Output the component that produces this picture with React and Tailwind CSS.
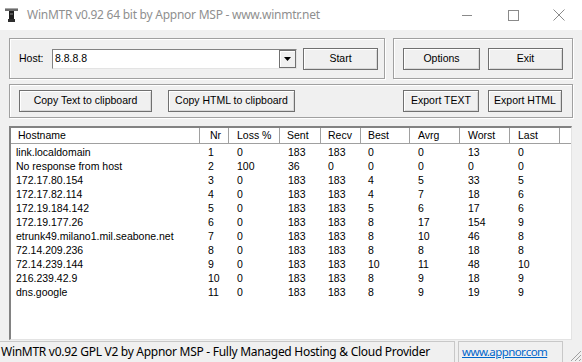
import React from "react";

const rows = [
  ["link.localdomain", 1, 0, 183, 183, 0, 0, 13, 0],
  ["No response from host", 2, 100, 36, 0, 0, 0, 0, 0],
  ["172.17.80.154", 3, 0, 183, 183, 4, 5, 33, 5],
  ["172.17.82.114", 4, 0, 183, 183, 4, 7, 18, 6],
  ["172.19.184.142", 5, 0, 183, 183, 5, 6, 17, 6],
  ["172.19.177.26", 6, 0, 183, 183, 8, 17, 154, 9],
  ["etrunk49.milano1.mil.seabone.net", 7, 0, 183, 183, 8, 10, 46, 8],
  ["72.14.209.236", 8, 0, 183, 183, 8, 8, 18, 8],
  ["72.14.239.144", 9, 0, 183, 183, 10, 11, 48, 10],
  ["216.239.42.9", 10, 0, 183, 183, 8, 9, 18, 9],
  ["dns.google", 11, 0, 183, 183, 8, 9, 19, 9],
];

const columns = [
  { label: "Hostname", cls: "w-[189px] pl-[5px]", head: "pl-[7px]" },
  { label: "Nr", cls: "w-[29px] pl-[8px]", head: "pl-[10px]" },
  { label: "Loss %", cls: "w-[51px] pl-[8px]", head: "pl-[8px]" },
  { label: "Sent", cls: "w-[41px] pl-[8px]", head: "pl-[7px]" },
  { label: "Recv", cls: "w-[40px] pl-[7px]", head: "pl-[7px]" },
  { label: "Best", cls: "w-[49px] pl-[7px]", head: "pl-[7px]" },
  { label: "Avrg", cls: "w-[50px] pl-[8px]", head: "pl-[8px]" },
  { label: "Worst", cls: "w-[50px] pl-[8px]", head: "pl-[8px]" },
  { label: "Last", cls: "w-[50px] pl-[8px]", head: "pl-[8px]" },
];

const ui = "font-['Liberation_Sans',Arial,sans-serif] text-[10.5px] text-black";

function Button({ children, className }) {
  return (
    <button
      className={`h-[22px] flex items-center justify-center bg-[#f0f0f0] border border-[#707070] shadow-[inset_1px_1px_0_#ffffff,inset_-1px_-1px_0_#d8d8d8] ${ui} ${className}`}
    >
      {children}
    </button>
  );
}

function GroupBox({ children, className }) {
  return (
    <div
      className={`flex items-center border border-[#a0a0a0] shadow-[inset_1px_1px_0_#ffffff,1px_1px_0_#ffffff] ${className}`}
    >
      {children}
    </div>
  );
}

export default function App() {
  return (
    <div className="w-[582px] h-[362px] flex flex-col bg-[#f0f0f0] overflow-hidden">
      {/* title bar */}
      <div className="h-[30px] bg-white flex items-center shrink-0">
        <svg width="14" height="16" viewBox="0 0 14 16" className="ml-[5px] mr-[8px]">
          <rect x="0" y="1" width="13" height="3" fill="#6b6b6b" />
          <rect x="0" y="1" width="13" height="1" fill="#a8a8a8" />
          <rect x="4" y="4" width="5" height="9" fill="#1e1e1e" />
          <rect x="5" y="6" width="3" height="2" fill="#555" />
          <rect x="3" y="12" width="7" height="3" fill="#2e2e2e" />
        </svg>
        <span className="font-['Noto_Sans',sans-serif] text-[12px] text-[#8f8f8f] tracking-[-0.25px]">
          WinMTR v0.92 64 bit by Appnor MSP - www.winmtr.net
        </span>
        <div className="ml-auto flex items-center h-full">
          <div className="w-[46px] h-full flex items-center justify-center">
            <div className="w-[10px] h-[1px] bg-[#8a8a8a]" />
          </div>
          <div className="w-[46px] h-full flex items-center justify-center">
            <div className="w-[11px] h-[11px] border border-[#8a8a8a]" />
          </div>
          <div className="w-[46px] h-full flex items-center justify-center">
            <svg width="12" height="12" viewBox="0 0 12 12">
              <path d="M0.5 0.5 L11.5 11.5 M11.5 0.5 L0.5 11.5" stroke="#8a8a8a" strokeWidth="1" />
            </svg>
          </div>
        </div>
      </div>

      {/* content */}
      <div className="flex-1 flex flex-col pt-[8px] pl-[9px] pr-[9px]">
        <div className="flex gap-[8px] h-[41px]">
          <GroupBox className="w-[376px] pl-[9px]">
            <span className={`${ui} w-[33px]`}>Host:</span>
            <div className="w-[245px] h-[20px] flex bg-white border border-t-[#828282] border-l-[#828282] border-r-[#e3e3e3] border-b-[#e3e3e3]">
              <span className={`${ui} flex-1 leading-[17px] pl-[2px]`}>8.8.8.8</span>
              <div className="w-[17px] h-full bg-[#f0f0f0] border border-[#707070] shadow-[inset_1px_1px_0_#ffffff] flex items-center justify-center">
                <svg width="7" height="4" viewBox="0 0 7 4">
                  <path d="M0 0 H7 L3.5 4 Z" fill="#000" />
                </svg>
              </div>
            </div>
            <Button className="w-[75px] ml-[6px]">Start</Button>
          </GroupBox>
          <GroupBox className="w-[180px] pl-[9px] gap-[8px]">
            <Button className="w-[77px]">Options</Button>
            <Button className="w-[75px]">Exit</Button>
          </GroupBox>
        </div>

        <GroupBox className="mt-[5px] h-[34px] w-[564px] pl-[9px]">
          <Button className="w-[133px]">Copy Text to clipboard</Button>
          <Button className="w-[127px] ml-[16px]">Copy HTML to clipboard</Button>
          <Button className="w-[76px] ml-auto">Export TEXT</Button>
          <Button className="w-[74px] ml-[9px] mr-[10px]">Export HTML</Button>
        </GroupBox>

        {/* list view */}
        <div className="mt-[8px] mb-[1px] w-[563px] flex-1 flex flex-col bg-white border-t-2 border-l-2 border-t-[#828282] border-l-[#828282] border-r border-b border-r-[#e3e3e3] border-b-[#e3e3e3]">
          <div className="flex h-[16px] bg-white border-b border-[#a0a0a0]">
            {columns.map((c) => (
              <div
                key={c.label}
                className={`${c.cls.split(" ")[0]} ${c.head} border-r border-[#a0a0a0] ${ui} leading-[15px]`}
              >
                {c.label}
              </div>
            ))}
          </div>
          <div className="pt-[1px]">
            {rows.map((r) => (
              <div key={r[0]} className="flex h-[14px]">
                {r.map((v, i) => (
                  <div key={i} className={`${columns[i].cls} ${ui} leading-[14px] whitespace-nowrap`}>
                    {v}
                  </div>
                ))}
              </div>
            ))}
          </div>
        </div>
      </div>

      {/* status bar */}
      <div className="h-[21px] flex shrink-0 font-['Noto_Sans',sans-serif] text-[12px]">
        <div className="w-[455px] border-t border-r border-[#c8c8c8] pl-[1px] leading-[19px] text-black whitespace-nowrap overflow-hidden tracking-[-0.28px]">
          WinMTR v0.92 GPL V2 by Appnor MSP - Fully Managed Hosting &amp; Cloud Provider
        </div>
        <div className="w-[105px] ml-[3px] border-t border-l border-r border-[#c8c8c8] pl-[3px] leading-[19px] text-[#0066cc] underline text-[11.5px] tracking-[-0.6px] whitespace-nowrap">
          www.appnor.com
        </div>
        <div className="flex-1 flex items-end justify-end">
          <svg width="14" height="14" viewBox="0 0 14 14">
            <path d="M13 3 L3 13 M13 7 L7 13 M13 11 L11 13" stroke="#a0a0a0" strokeWidth="1" />
          </svg>
        </div>
      </div>
    </div>
  );
}
